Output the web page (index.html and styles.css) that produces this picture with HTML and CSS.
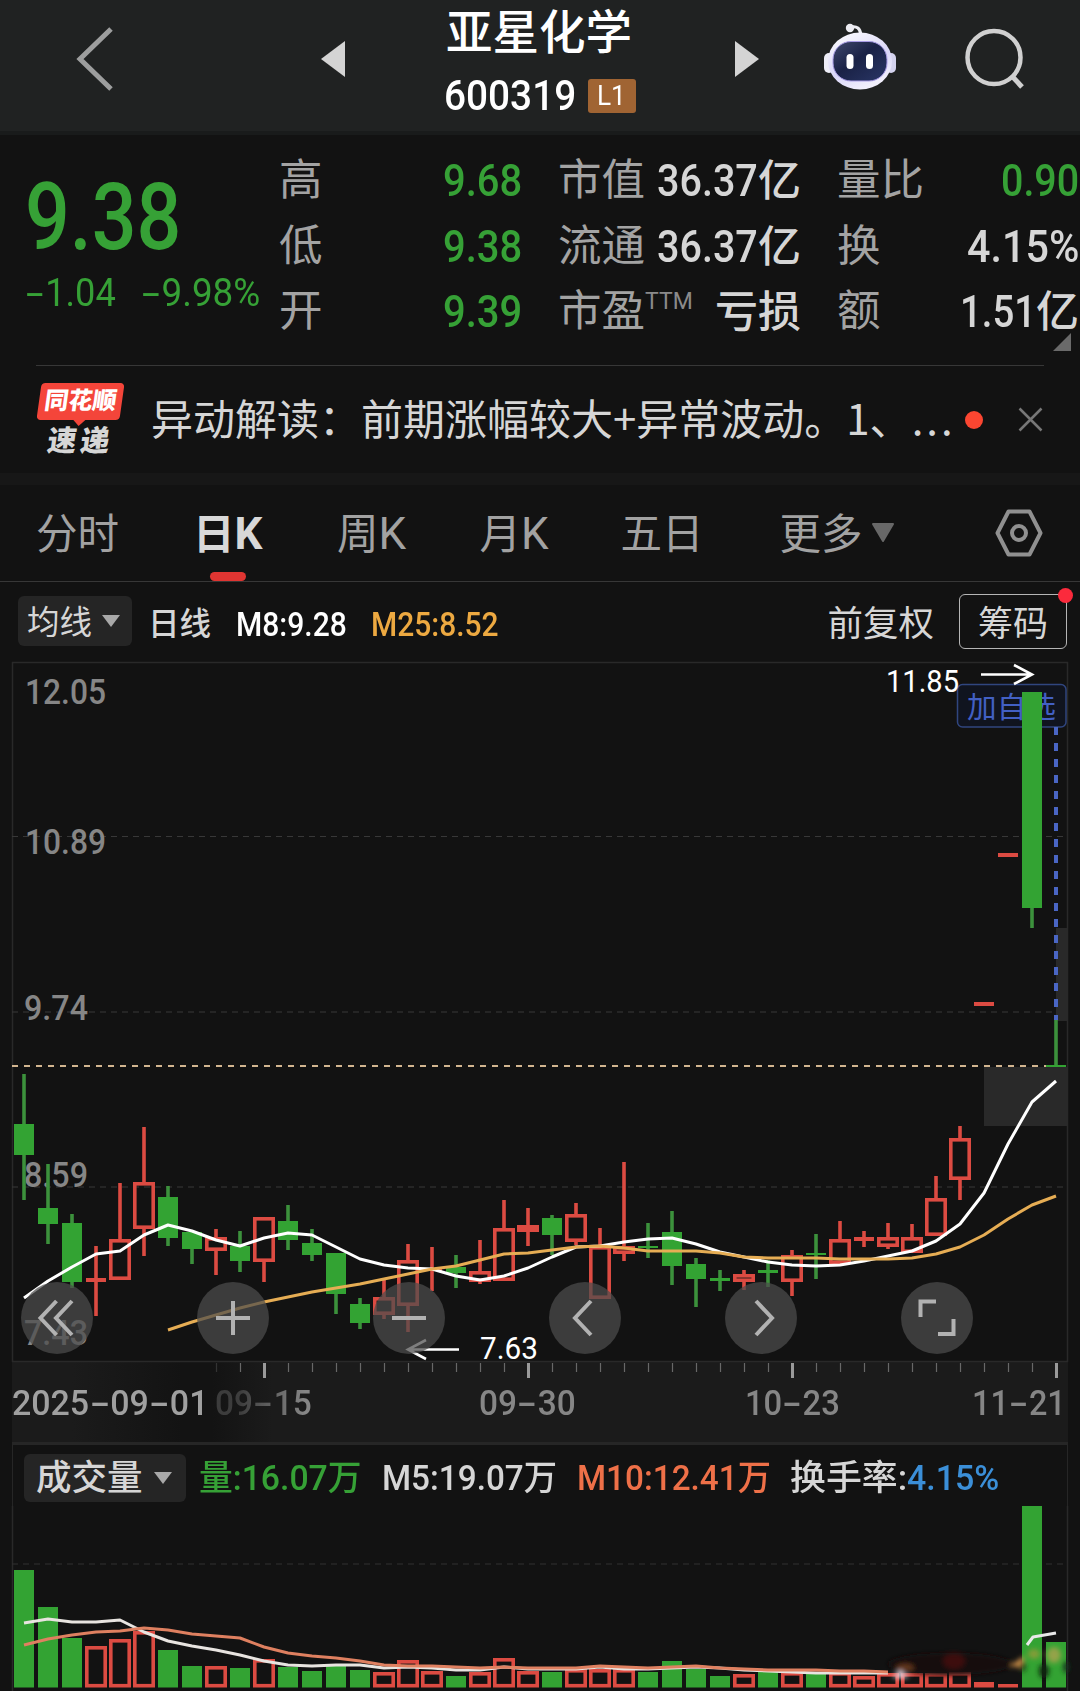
FILE: index.html
```html
<!DOCTYPE html>
<html lang="zh-CN">
<head>
    <meta charset="UTF-8">
    <meta name="viewport" content="width=device-width, initial-scale=1.0">
    <title>亚星化学 600319</title>
    <link rel="stylesheet" href="styles.css">
</head>
<body>
    <header class="header">
        <svg class="icon-back" width="40" height="66" viewBox="0 0 40 66"><path d="M36 3 L5 33 L36 63" fill="none" stroke="#9d9e9e" stroke-width="5"/></svg>
        <svg class="icon-prev" width="24" height="36" viewBox="0 0 24 36"><path d="M24 0 V36 L0 18 Z" fill="#d4d4d4"/></svg>
        <div class="title">
            <h1>亚星化学</h1>
            <div class="code"><span class="num" data-w="132">600319</span><span class="badge"><span class="num" data-w="29">L1</span></span></div>
        </div>
        <svg class="icon-next" width="24" height="36" viewBox="0 0 24 36"><path d="M0 0 V36 L24 18 Z" fill="#d4d4d4"/></svg>
        <svg class="icon-robot" width="72" height="68" viewBox="0 0 72 68">
            <defs>
                <linearGradient id="shell" x1="0" y1="0" x2="0.5" y2="1"><stop offset="0" stop-color="#ffffff"/><stop offset="0.65" stop-color="#d9d6f8"/><stop offset="1" stop-color="#f1effc"/></linearGradient>
                <linearGradient id="visor" x1="0" y1="0" x2="1" y2="1"><stop offset="0" stop-color="#3f486d"/><stop offset="0.45" stop-color="#1a2246"/><stop offset="1" stop-color="#293666"/></linearGradient>
            </defs>
            <circle cx="26" cy="5" r="4.2" fill="#ececf2"/>
            <path d="M27 4 C33 3 36 5 37 12" fill="none" stroke="#ececf2" stroke-width="3"/>
            <rect x="0" y="30" width="10" height="20" rx="5" fill="#eeeef8"/>
            <rect x="62" y="30" width="10" height="20" rx="5" fill="#d4d3ef"/>
            <ellipse cx="36" cy="38" rx="32" ry="28.500" fill="url(#shell)"/>
            <rect x="9" y="18.500" width="54" height="39.500" rx="18" fill="url(#visor)" stroke="#a99de6" stroke-width="1"/>
            <rect x="22.500" y="31" width="7" height="15" rx="3.500" fill="#fff"/>
            <rect x="42" y="31" width="7" height="15" rx="3.500" fill="#fff"/>
        </svg>
        <svg class="icon-search" width="62" height="62" viewBox="0 0 62 62"><circle cx="30" cy="29.500" r="26.500" fill="none" stroke="#d0d0d0" stroke-width="4.500"/><path d="M47.500 47.500 L58 59" stroke="#d0d0d0" stroke-width="5"/></svg>
    </header>

    <section class="quote">
        <div class="price">
            <div class="last"><span class="num" data-w="156">9.38</span></div>
            <div class="change">
                <span class="num" data-w="91"><i class="dash">-</i>1.04</span>
                <span class="num" data-w="119"><i class="dash">-</i>9.98%</span>
            </div>
        </div>
        <dl class="stats">
            <dt>高</dt><dd class="green"><span class="num" data-w="79">9.68</span></dd>
            <dt>市值</dt><dd><span class="num" data-w="101">36.37</span>亿</dd>
            <dt>量比</dt><dd class="green"><span class="num" data-w="78">0.90</span></dd>
            <dt>低</dt><dd class="green"><span class="num" data-w="79">9.38</span></dd>
            <dt>流通</dt><dd><span class="num" data-w="101">36.37</span>亿</dd>
            <dt>换</dt><dd><span class="num" data-w="112">4.15%</span></dd>
            <dt>开</dt><dd class="green"><span class="num" data-w="79">9.39</span></dd>
            <dt>市盈<sup>TTM</sup></dt><dd>亏损</dd>
            <dt>额</dt><dd><span class="num" data-w="76">1.51</span>亿</dd>
        </dl>
        <svg class="corner" width="18" height="18" viewBox="0 0 18 18"><path d="M18 0 V18 H0 Z" fill="#6a6a6a"/></svg>
    </section>

    <section class="news">
        <div class="news-logo">
            <div class="news-tag">同花顺</div>
            <div class="news-sub">速递</div>
        </div>
        <p class="news-text">异动解读：前期涨幅较大+异常波动。1、<span class="dots">...</span></p>
        <span class="news-dot"></span>
        <svg width="25" height="25" viewBox="0 0 25 25"><path d="M1.500 1.500 L23.500 23.500 M23.500 1.500 L1.500 23.500" stroke="#777" stroke-width="2.500"/></svg>
    </section>

    <nav class="tabs">
        <a>分时</a>
        <a class="active">日<span class="latin">K</span></a>
        <a>周<span class="latin">K</span></a>
        <a>月<span class="latin">K</span></a>
        <a>五日</a>
        <a>更多<svg class="caret" width="24" height="20" viewBox="0 0 24 20"><path d="M2 1 H22 L12 18 Z" fill="#686868" stroke="#686868" stroke-width="2" stroke-linejoin="round"/></svg></a>
        <svg class="gear" width="50" height="50" viewBox="0 0 50 50"><path d="M14.500 3.500 H35.500 L46.500 25 L35.500 46.500 H14.500 L3.500 25 Z" fill="none" stroke="#909090" stroke-width="4" stroke-linejoin="round"/><circle cx="25" cy="25" r="7" fill="none" stroke="#909090" stroke-width="4"/></svg>
    </nav>

    <section class="ma-bar">
        <button class="picker">均线<svg width="20" height="14" viewBox="0 0 20 14"><path d="M1 1 H19 L10 13 Z" fill="#a8a8a8"/></svg></button>
        <span class="ma-name">日线</span>
        <span class="ma-8"><span class="num" data-w="111">M8:9.28</span></span>
        <span class="ma-25"><span class="num" data-w="128">M25:8.52</span></span>
        <span class="adjust">前复权</span>
        <button class="chips">筹码<span class="chips-dot"></span></button>
    </section>

    <section class="kline">
        <svg id="kline" width="1080" height="700" viewBox="0 662 1080 700"></svg>
        <div class="controls">
            <button><svg width="36" height="36" viewBox="0 0 36 36"><path d="M17.500 1 L1.500 18 L17.500 35 M33 1 L17 18 L33 35"/></svg></button>
            <button><svg width="36" height="36" viewBox="0 0 36 36"><path d="M1 18 H35 M18 1 V35"/></svg></button>
            <button><svg width="36" height="36" viewBox="0 0 36 36"><path d="M1 18 H35"/></svg></button>
            <button><svg width="36" height="36" viewBox="0 0 36 36"><path d="M24 1 L8 18 L24 35"/></svg></button>
            <button><svg width="36" height="36" viewBox="0 0 36 36"><path d="M13 1 L29 18 L13 35"/></svg></button>
            <button><svg width="38" height="38" viewBox="0 0 38 38"><path d="M18 2.500 H2.500 V18 M35.500 20 V35 H20"/></svg></button>
        </div>
    </section>

    <section class="axis">
        <svg id="ticks" width="1056" height="20" viewBox="12 1362 1056 20"></svg>
        <div class="dates">
            <span class="first"><span class="num" data-w="196">2025<i class="dash">-</i>09<i class="dash">-</i>01</span></span>
            <span class="faded"><span class="num" data-w="97">09<i class="dash">-</i>15</span></span>
            <span><span class="num" data-w="97">09<i class="dash">-</i>30</span></span>
            <span><span class="num" data-w="95">10<i class="dash">-</i>23</span></span>
            <span><span class="num" data-w="94">11<i class="dash">-</i>21</span></span>
        </div>
    </section>

    <section class="volume">
        <div class="vol-bar">
            <button class="picker wide">成交量<svg width="20" height="14" viewBox="0 0 20 14"><path d="M1 1 H19 L10 13 Z" fill="#a8a8a8"/></svg></button>
            <span class="green"><span class="num" data-w="163">量:16.07万</span></span>
            <span class="vol-5"><span class="num" data-w="175">M5:19.07万</span></span>
            <span class="vol-10"><span class="num" data-w="194">M10:12.41万</span></span>
            <span class="turnover"><span class="num" data-w="117">换手率:</span><span class="num blue" data-w="92">4.15%</span></span>
        </div>
        <svg id="volume" width="1080" height="185" viewBox="0 1506 1080 185"></svg>
    </section>

    <script src="chart.js"></script>
</body>
</html>
```
FILE: styles.css
```css
* { box-sizing: border-box; margin: 0; padding: 0; }
body { width: 1080px; height: 1691px; overflow: hidden; background: #121212; color: #d6d6d6; font-family: Roboto, "Noto Sans CJK SC", sans-serif; }
button { border: 0; background: none; color: inherit; font: inherit; }
svg { display: block; flex: none; overflow: visible; }
i { font-style: normal; }

.num { display: inline-block; white-space: nowrap; transform-origin: 0 50%; }
.dash { display: inline-block; margin: 0 .14em; transform: scaleX(1.75); }
.green { color: #36a136; }
.blue { color: #3b8fd8; }

.header { display: flex; height: 135px; background: #202222; border-bottom: 4px solid #191b1b; padding-left: 75px; }
.icon-back { margin-top: 26px; }
.icon-prev { margin: 41px 0 0 206px; }
.title { width: 390px; padding: 6px 0 0 101px; color: #fff; }
.title h1 { font-size: 46.500px; line-height: 54px; font-weight: 500; }
.code { display: flex; align-items: center; height: 70px; margin-left: -2px; padding-top: 1px; font-size: 42px; font-weight: 500; }
.badge { width: 48px; height: 34px; margin-left: 12px; padding-left: 9px; border-radius: 3px; background: #a06433; font-size: 28px; font-weight: 400; line-height: 34px; }
.icon-next { margin-top: 41px; }
.icon-robot { margin: 23px 0 0 65px; }
.icon-search { margin: 28px 0 0 68px; }

.quote { display: flex; height: 230px; margin-left: 27px; }
.price { width: 252px; padding-top: 29px; color: #36a136; }
.last { height: 106px; margin-left: -2px; font-size: 92px; line-height: 107px; font-weight: 500; }
.change { display: flex; gap: 25px; font-size: 39px; line-height: 47px; margin-left: -2px; }
.stats { display: grid; grid-template-columns: 101px 142px 130px 149px 100px 178px; grid-auto-rows: 65.500px; padding-top: 13px; }
.stats dt { color: #a3a3a3; font-size: 43.500px; line-height: 65px; white-space: nowrap; }
.stats dd { font-size: 43px; line-height: 66px; text-align: right; font-weight: 500; white-space: nowrap; }
.stats .num { font-size: 45px; }
.stats dt:nth-of-type(3n+2) { margin-left: 36px; }
.stats dt:nth-of-type(3n) { margin-left: 36px; }
.stats sup { font-size: 23px; line-height: 0; vertical-align: 17px; color: #8a8a8a; }
.corner { align-self: flex-end; margin: 0 0 14px -26px; }

.news { display: flex; align-items: center; height: 108px; margin: 0 36px; border-top: 1px solid #373737; }
.news-logo { flex: none; width: 115px; padding: 2px 0 0 3px; }
.news-tag { position: relative; width: 83px; height: 37px; border-radius: 4px; background: #f4453a; transform: skewX(-8deg); color: #fff; font-size: 24px; font-weight: 900; line-height: 36px; text-align: center; }
.news-tag::after { content: ""; position: absolute; left: 36px; top: 36px; border: 7px solid transparent; border-top-color: #f4453a; border-bottom: 0; }
.news-sub { width: 80px; height: 38px; padding-left: 9px; transform: skewX(-8deg); font-size: 29px; font-weight: 900; line-height: 42px; letter-spacing: 4px; white-space: nowrap; }
.news-text { flex: none; width: 806px; padding-bottom: 7px; font-size: 42px; white-space: nowrap; font-family: "Noto Sans CJK SC", sans-serif; }
.dots { letter-spacing: 3px; }
.news-dot { width: 18px; height: 18px; border-radius: 50%; background: #fb4631; margin: 0 35px 0 8px; flex: none; }

.tabs { display: flex; align-items: center; height: 109px; border-top: 12px solid #171717; border-bottom: 1px solid #373737; padding-left: 36px; }
.tabs a { position: relative; display: flex; align-items: center; height: 96px; padding-bottom: 4px; font-size: 41.500px; color: #a2a2a2; white-space: nowrap; }
.tabs a:nth-child(1) { width: 157px; }
.tabs a:nth-child(2) { width: 144px; }
.tabs a:nth-child(3) { width: 142.500px; }
.tabs a:nth-child(4) { width: 141px; }
.tabs a:nth-child(5) { width: 159px; }
.tabs a:nth-child(6) { width: 214px; }
.tabs .latin { padding-top: 5px; font-size: 44px; }
.tabs .active { color: #d8d8d8; font-weight: 700; }
.tabs .active::after { content: ""; position: absolute; left: 17px; bottom: 0; width: 36px; height: 9px; border-radius: 5px; background: #e03532; }
.caret { margin: 3px 0 0 8px; }

.ma-bar { display: flex; align-items: center; height: 80px; padding: 0 13px 2px 18px; }
.picker { display: flex; align-items: center; justify-content: space-between; width: 114px; height: 50px; padding: 0 11px 3px 9px; border-radius: 6px; background: #252525; font-size: 32.500px; }
.picker svg { margin-top: 3px; }
.ma-name { width: 88px; margin-left: 16px; padding-bottom: 1px; font-size: 31.500px; font-weight: 500; }
.ma-8 { width: 135px; padding-top: 6px; font-size: 33px; font-weight: 500; color: #fff; }
.ma-25 { padding-top: 6px; font-size: 33px; font-weight: 500; color: #eda941; }
.adjust { margin-left: auto; margin-right: 25px; padding-bottom: 2px; font-size: 35.500px; }
.chips { position: relative; width: 108px; height: 55px; padding-bottom: 3px; border: 1.500px solid #b5b5b5; border-radius: 6px; font-size: 35px; }
.chips-dot { position: absolute; right: -7px; top: -7px; width: 15px; height: 15px; border-radius: 50%; background: #fb2a3c; }

.kline { position: relative; height: 700px; }
.controls { position: absolute; left: 21px; top: 620px; display: flex; gap: 104px; }
.controls button { display: flex; align-items: center; justify-content: center; width: 72px; height: 72px; border-radius: 50%; background: rgba(76, 76, 76, .72); }
.controls path { fill: none; stroke: #b2b2b2; stroke-width: 4; }

.axis { height: 80px; margin: 0 12px; background: linear-gradient(90deg, #1b1b1b 60px, #131313 170px, #131313 200px, #1b1b1b 260px); }
.dates { display: grid; grid-template-columns: 203px 264px 266px 227px 96px; font-size: 35.500px; font-weight: 500; line-height: 43px; color: #868686; }
.dates .first { color: #a0a0a0; }
.faded { -webkit-mask-image: linear-gradient(90deg, rgba(0,0,0,.35) 25px, #000 90px); mask-image: linear-gradient(90deg, rgba(0,0,0,.35) 25px, #000 90px); }

.volume { height: 249px; }
.vol-bar { display: flex; align-items: center; height: 64px; padding: 4px 0 0 11px; border: 1px solid #262626; border-top-width: 3px; border-bottom: 0; margin: 0 12px; font-size: 35px; line-height: 42px; font-weight: 500; }
.vol-bar > span { padding-top: 2px; }
.picker.wide { width: 162px; height: 48px; padding: 0 13px 0 12px; font-size: 35.500px; margin-right: 13px; }
.picker.wide svg { margin-top: 0; }
.vol-bar .green { width: 183px; }
.vol-5 { width: 195px; }
.vol-10 { width: 213px; color: #ee7048; }
.turnover { white-space: nowrap; }

svg text { font-family: Roboto, "Noto Sans CJK SC", sans-serif; }
.y-label { font-size: 35px; font-weight: 500; fill: #868686; }
.mark { font-size: 31px; fill: #fff; }
.tag { font-size: 29px; fill: #4260c4; }
```
FILE: chart.js
```javascript
// Squeeze the digits to the narrow width of the quote font
document.querySelectorAll('.num').forEach(el => {
    const natural = el.offsetWidth;
    const width = Number(el.dataset.w);
    el.style.transform = `scaleX(${width / natural})`;
    el.style.marginRight = `${width - natural}px`;
});

const GREEN = '#33a333';
const RED = '#dc4b42';
const x = i => 24 + i * 24;

// kind, high, low, body top, body bottom
const candles = [
    ['g', 1074, 1200, 1124, 1155], ['g', 1164, 1244, 1208, 1224], ['g', 1214, 1288, 1223, 1282], ['r', 1246, 1316, 1278, 1282],
    ['r', 1183, 1280, 1239, 1280], ['r', 1127, 1256, 1182, 1229], ['g', 1186, 1246, 1197, 1238], ['g', 1230, 1264, 1232, 1249],
    ['r', 1229, 1275, 1237, 1251], ['g', 1231, 1272, 1246, 1261], ['r', 1217, 1282, 1217, 1262], ['g', 1205, 1250, 1221, 1240],
    ['g', 1229, 1261, 1243, 1255], ['g', 1253, 1314, 1253, 1294], ['g', 1298, 1329, 1304, 1323], ['r', 1280, 1319, 1297, 1315],
    ['r', 1244, 1332, 1260, 1306], ['r', 1247, 1291, 1268, 1271], ['g', 1255, 1288, 1267, 1273], ['r', 1240, 1284, 1271, 1282],
    ['r', 1200, 1280, 1228, 1281], ['r', 1208, 1246, 1225, 1232], ['g', 1215, 1255, 1218, 1235], ['r', 1203, 1245, 1214, 1242],
    ['r', 1228, 1299, 1246, 1299], ['r', 1162, 1261, 1246, 1254], ['g', 1223, 1258, 1246, 1248], ['g', 1211, 1285, 1232, 1266],
    ['g', 1258, 1307, 1264, 1279], ['g', 1270, 1291, 1278, 1281], ['r', 1270, 1290, 1274, 1282], ['g', 1260, 1287, 1270, 1273],
    ['r', 1250, 1296, 1255, 1282], ['g', 1234, 1279, 1253, 1255], ['r', 1221, 1264, 1239, 1264], ['r', 1231, 1247, 1237, 1241],
    ['r', 1223, 1249, 1237, 1247], ['r', 1224, 1253, 1237, 1253], ['r', 1176, 1236, 1198, 1236], ['r', 1126, 1200, 1138, 1180],
    ['d', 0, 0, 1002, 1006], ['d', 0, 0, 853, 857], ['g', 692, 928, 692, 908], ['g', 1020, 1066, 1065, 1067]
];
const ma8 = [1298, 1281, 1267, 1254, 1251, 1235, 1225, 1231, 1240, 1246, 1238, 1233, 1235, 1247, 1259, 1265, 1268, 1269, 1276, 1280, 1276, 1268, 1257, 1247, 1246, 1242, 1239, 1238, 1244, 1252, 1257, 1262, 1265, 1266, 1265, 1261, 1256, 1251, 1241, 1224, 1193, 1144, 1102, 1081];
const ma25 = [1330, 1322, 1315, 1308, 1302, 1297, 1292, 1288, 1284, 1279, 1274, 1269, 1266, 1260, 1254, 1253, 1250, 1247, 1246, 1248, 1251, 1251, 1251, 1253, 1257, 1258, 1258, 1258, 1259, 1259, 1259, 1258, 1254, 1247, 1235, 1219, 1205, 1196];

function box(kind, cx, top, bottom) {
    if (kind === 'r' && bottom - top > 5) {
        return `<rect x="${cx - 9.2}" y="${top + 1.8}" width="18.4" height="${bottom - top - 3.6}" fill="none" stroke="${RED}" stroke-width="3.6"/>`;
    }
    return `<rect x="${cx - 10}" y="${top}" width="20" height="${bottom - top}" fill="${kind === 'g' ? GREEN : RED}"/>`;
}

function line(points, color, width = 3) {
    return `<polyline points="${points.map(p => p.join()).join(' ')}" fill="none" stroke="${color}" stroke-width="${width}" stroke-linejoin="round"/>`;
}

function dashed(y, x2 = 1068, color = '#383838', dash = '6 5', width = 1.2) {
    return `<path d="M12 ${y} H${x2}" stroke="${color}" stroke-dasharray="${dash}" stroke-width="${width}"/>`;
}

function label(cls, px, y, width, text) {
    return `<text class="${cls}" x="${px}" y="${y}" textLength="${width}" lengthAdjust="spacingAndGlyphs">${text}</text>`;
}

// Price chart
let k = '<path d="M12.500 1362 V662.500 H1067.500 V1362 M12 1361.500 H1068" fill="none" stroke="#292929" stroke-width="1.500"/>';
k += [836.5, 1012, 1187].map(y => dashed(y)).join('');
k += '<rect x="1056" y="928" width="12" height="93" fill="#292929"/><rect x="984" y="1067" width="84" height="59" fill="#292929"/>';
k += '<rect x="957.500" y="684.500" width="108.500" height="42.500" rx="5" fill="#10141f" stroke="#30467f" stroke-width="1.500"/>';
k += label('tag', 967, 717.5, 89, '加自选');
k += '<path d="M1056 727 V1020" stroke="#4a66c4" stroke-width="4" stroke-dasharray="8 8"/>';
k += dashed(1066, 1046, '#d2b590', '6 6', 2);
k += label('y-label', 25, 704, 81, '12.05') + label('y-label', 25, 854, 81, '10.89') + label('y-label', 24, 1020, 64, '9.74')
    + label('y-label', 24, 1187, 64, '8.59') + label('y-label', 24, 1345, 64, '7.43');
candles.forEach(([kind, high, low, top, bottom], i) => {
    if (high) {
        const color = kind === 'g' ? '#3c913c' : RED;
        const hollow = kind === 'r' && bottom - top > 5;
        k += hollow
            ? `<path d="M${x(i)} ${high} V${top} M${x(i)} ${bottom} V${low}" stroke="${color}" stroke-width="3.600"/>`
            : `<path d="M${x(i)} ${high} V${low}" stroke="${color}" stroke-width="3.600"/>`;
    }
    k += box(kind, x(i), top, bottom);
});
k += line(ma8.map((y, i) => [x(i), y]), '#fff');
k += line(ma25.map((y, i) => [x(i + 6), y]), '#e6ad54');
k += label('mark', 886, 692, 73, '11.85') + label('mark', 480, 1359, 58, '7.63');
k += '<path d="M981 674.500 H1031 M1014 665 L1032 674.500 L1014 684 M459 1349.500 H409 M426 1340 L408 1349.500 L426 1359" fill="none" stroke="#fff" stroke-width="2.600"/>';
document.getElementById('kline').innerHTML = k;

// Date ticks, a long one at each labelled day
let t = '';
for (let i = 8; i < 44; i++) {
    const long = [10, 21, 32, 43].includes(i);
    t += `<path d="M${x(i) + .5} 1363 V${long ? 1378 : 1372}" stroke="${long ? '#9a9a9a' : i < 9 ? '#333' : '#686868'}" stroke-width="${long ? 3 : 1.2}"/>`;
}
document.getElementById('ticks').innerHTML = t;

// Volume chart
const volumes = 'g1570 g1607 g1638 r1646 r1639 r1631 g1650 g1666 r1666 g1668 r1659 g1667 g1671 g1664 g1670 r1672 r1660 r1671 g1676 r1672 r1658 r1671 g1672 r1669 r1669 r1669 g1672 g1661 g1669 g1676 r1674 g1671 r1672 g1674 r1672 r1676 r1673 r1673 r1673 r1672 d1682 d1684 g1506 g1642'.split(' ');
const v5 = [1623, 1619, 1622, 1622, 1620, 1632, 1641, 1646, 1650, 1655, 1661, 1665, 1666, 1665, 1665, 1668, 1667, 1668, 1670, 1670, 1667, 1669, 1669, 1669, 1667, 1669, 1669, 1668, 1667, 1668, 1670, 1671, 1672, 1673, 1673, 1673, 1673];
const v10 = [1645, 1639, 1635, 1632, 1631, 1628, 1630, 1634, 1636, 1638, 1647, 1653, 1656, 1658, 1661, 1665, 1666, 1666, 1667, 1668, 1667, 1668, 1668, 1668, 1666, 1667, 1668, 1667, 1666, 1668, 1669, 1670, 1670, 1670, 1671, 1671, 1672];
let v = '<path d="M12.500 1506 V1691 M1067.500 1506 V1691" stroke="#292929" stroke-width="1.500"/>' + dashed(1564, 1066, '#303030');
volumes.forEach((bar, i) => { v += box(bar[0], x(i), Number(bar.slice(1)), 1687.5); });
v += line(v5.map((y, i) => [x(i), y]), '#e8e4e0') + line(v10.map((y, i) => [x(i), y]), '#df8060');
v += line([[1027, 1645], [1033, 1637], [1056, 1633]], '#e8e8e8', 3);
v += `<defs><filter id="soft" x="-50%" y="-50%" width="200%" height="200%"><feGaussianBlur stdDeviation="2.5"/></filter></defs>
    <g filter="url(#soft)">
        <ellipse cx="950" cy="1664" rx="62" ry="11" fill="#161110"/>
        <ellipse cx="954" cy="1661" rx="11" ry="8" fill="#3d0b0b"/>
        <ellipse cx="905" cy="1668" rx="9" ry="4" fill="#63371f"/>
        <path d="M892 1678 L900 1670 L909 1678 Z" fill="#e8d4e0"/>
        <path d="M1010 1666 L1024 1656 V1668 Z" fill="#d09048"/>
        <ellipse cx="1034" cy="1654" rx="6" ry="5" fill="#849d39"/>
        <ellipse cx="1054" cy="1655" rx="7" ry="8" fill="#94a349"/>
        <ellipse cx="1044" cy="1671" rx="5" ry="7" fill="#0d260f"/>
        <ellipse cx="1023" cy="1667" rx="3" ry="5" fill="#174418"/>
        <ellipse cx="1066" cy="1667" rx="3" ry="6" fill="#15301a"/>
    </g>`;
document.getElementById('volume').innerHTML = v;
```
